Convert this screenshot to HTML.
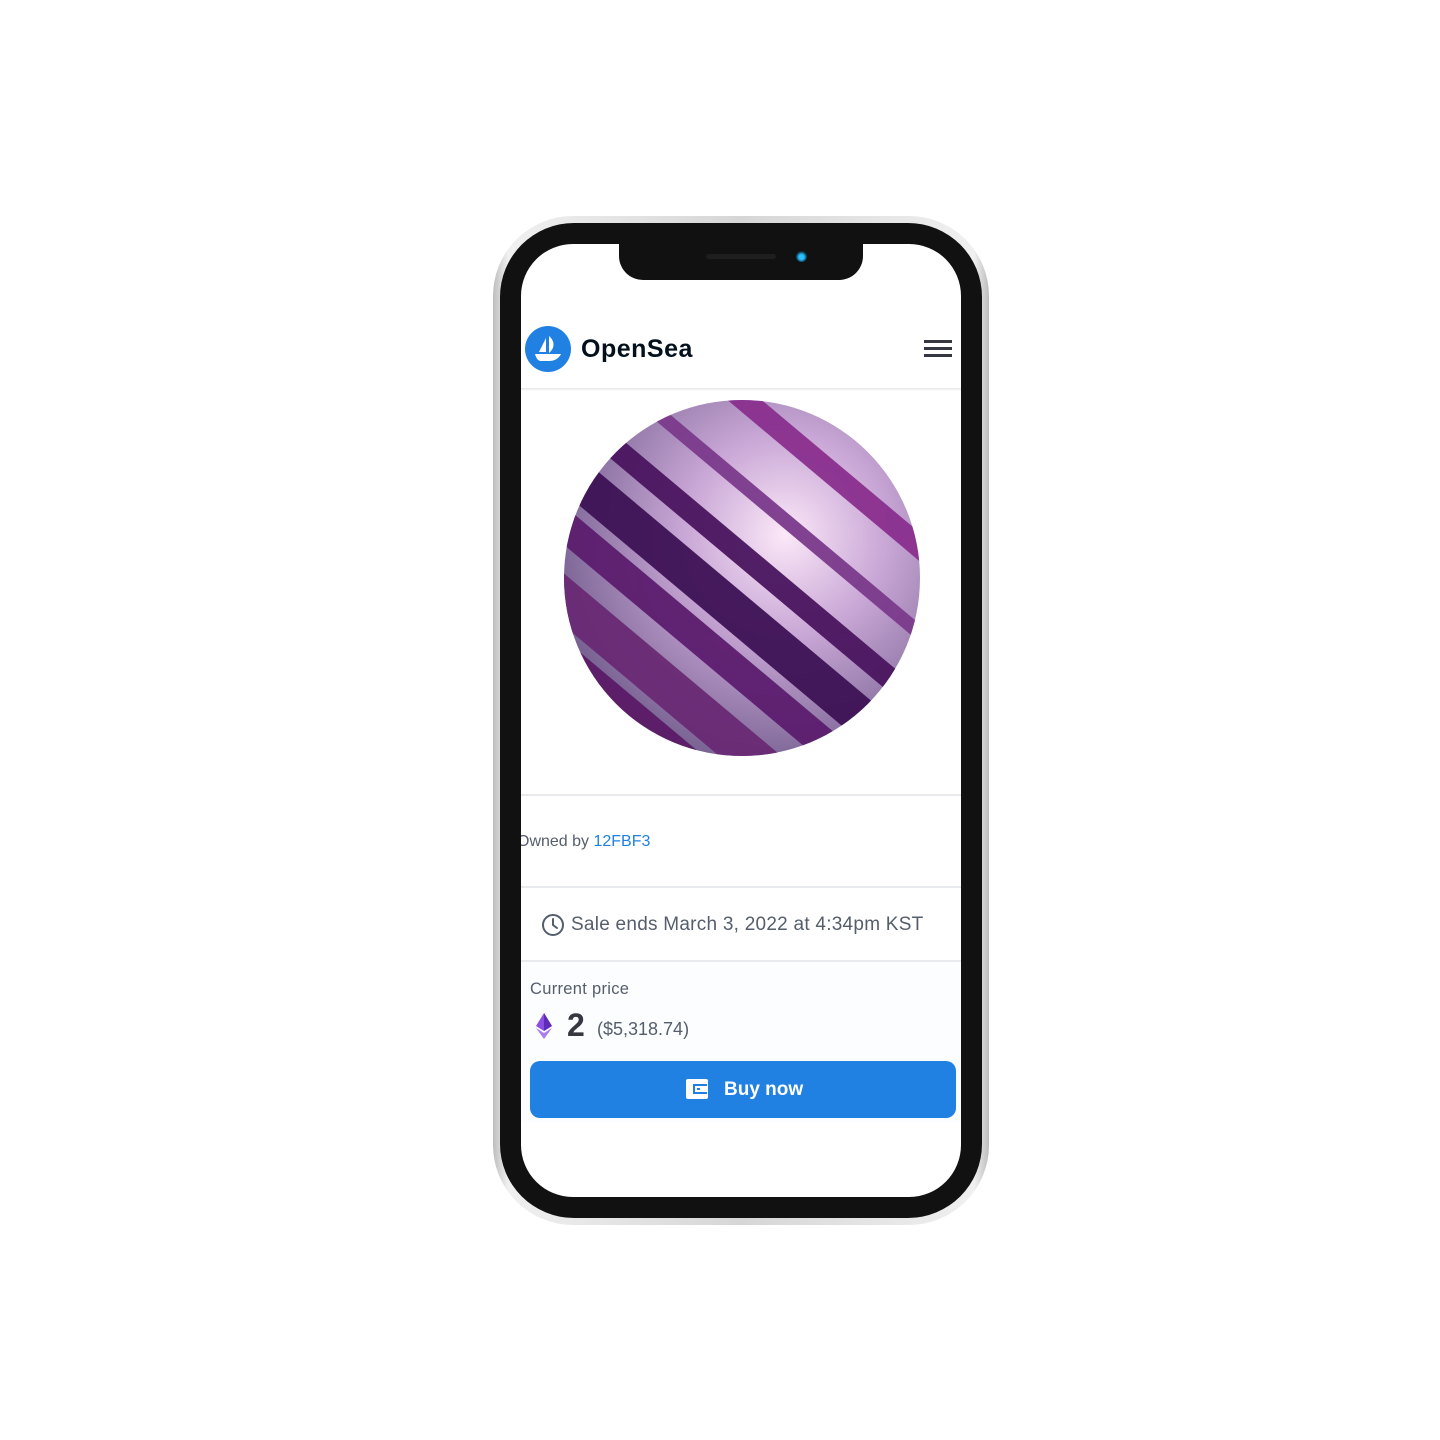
<!DOCTYPE html>
<html><head><meta charset="utf-8"><style>
*{margin:0;padding:0;box-sizing:border-box}
body{width:1440px;height:1440px;background:#fff;position:relative;overflow:hidden;font-family:"Liberation Sans",sans-serif}
.frame{position:absolute;left:493px;top:216px;width:496px;height:1009px;border-radius:80px;background:linear-gradient(90deg,#bdbdbd,#f0f0f0 3%,#d6d6d6 50%,#f0f0f0 97%,#bdbdbd);}
.bezel{position:absolute;left:500px;top:223px;width:482px;height:995px;border-radius:74px;background:#111;}
.screen{position:absolute;left:521px;top:244px;width:440px;height:953px;border-radius:52px;background:#fff;overflow:hidden}
.notch{position:absolute;left:619px;top:240px;width:244px;height:40px;background:#111;border-radius:0 0 24px 24px}
.spk{position:absolute;left:706px;top:254px;width:70px;height:5px;border-radius:3px;background:#1e1e1e}
.cam{position:absolute;left:796px;top:251px;width:11px;height:11px;border-radius:50%;background:radial-gradient(circle at 50% 55%,#2bc0ff 30%,#0a4c6a 60%,#151515 75%)}
.abs{position:absolute}
.sep{position:absolute;left:0;width:440px;height:2px;background:#e8eaed}
</style></head><body>
<div class="frame"></div>
<div class="bezel"></div>
<div class="screen">
  <div class="abs" style="left:4px;top:82px;width:46px;height:46px;border-radius:50%;background:#2081e2"></div>
  <svg class="abs" style="left:4px;top:82px" width="46" height="46" viewBox="0 0 46 46">
    <path d="M21 12 L21 26 L14 26 Z" fill="#fff"/>
    <path d="M24 10 C30 15 30 22 24 27 Z" fill="#fff"/>
    <path d="M10 28 H36 C34 32 30 35 24 35 H16 C13 35 11 32 10 28 Z" fill="#fff"/>
  </svg>
  <div class="abs" style="left:60px;top:91px;font-size:25px;font-weight:bold;color:#04111d;letter-spacing:0.5px">OpenSea</div>
  <div class="abs" style="left:403px;top:96px;width:28px;height:3px;background:#353840"></div>
  <div class="abs" style="left:403px;top:103px;width:28px;height:3px;background:#353840"></div>
  <div class="abs" style="left:403px;top:110px;width:28px;height:3px;background:#353840"></div>
  <div class="abs" style="left:0;top:144px;width:440px;height:3px;background:linear-gradient(#e4e4e4,#fff)"></div>
  <svg class="abs" style="left:42px;top:155px" width="358" height="358" viewBox="0 0 358 358">
    <defs>
      <clipPath id="c"><circle cx="179" cy="179" r="178"/></clipPath>
      <radialGradient id="g" cx="62%" cy="38%" r="70%"><stop offset="0" stop-color="#fbe8f8"/><stop offset=".4" stop-color="#c9a7d6"/><stop offset="1" stop-color="#6e5a8a"/></radialGradient>
    </defs>
    <g clip-path="url(#c)">
      <rect width="358" height="358" fill="url(#g)"/>
      <g transform="rotate(40 179 179)" opacity=".95">
        <rect x="-100" y="190" width="560" height="38" fill="#3e1256"/>
        <rect x="-100" y="238" width="560" height="30" fill="#5c1d6e"/>
        <rect x="-100" y="150" width="560" height="22" fill="#4a165f"/>
        <rect x="-100" y="290" width="560" height="40" fill="#6a2a74"/>
        <rect x="-100" y="100" width="560" height="14" fill="#7b3a8c"/>
        <rect x="-100" y="30" width="560" height="22" fill="#8a2f8e"/>
        <rect x="-100" y="340" width="560" height="40" fill="#5b1b66"/>
      </g>
    </g>
  </svg>
  <div class="sep" style="top:550px"></div>
  <div class="abs" style="left:-4px;top:589px;font-size:16px;color:#555e6b">Owned by <span style="color:#2081e2">12FBF3</span></div>
  <div class="sep" style="top:642px"></div>
  <svg class="abs" style="left:20px;top:669px" width="24" height="24" viewBox="0 0 24 24"><circle cx="12" cy="12" r="10" fill="none" stroke="#555e6b" stroke-width="2"/><path d="M12 6v6l4 3" fill="none" stroke="#555e6b" stroke-width="2" stroke-linecap="round"/></svg>
  <div class="abs" style="left:50px;top:670px;font-size:19px;color:#555e6b;letter-spacing:0.25px">Sale ends March 3, 2022 at 4:34pm KST</div>
  <div class="sep" style="top:716px"></div>
  <div class="abs" style="left:0;top:718px;width:440px;height:160px;background:#fbfdff"></div>
  <div class="abs" style="left:9px;top:736px;font-size:16.5px;color:#555e6b;letter-spacing:0.3px">Current price</div>
  <svg class="abs" style="left:14px;top:768px" width="18" height="28" viewBox="0 0 18 28"><path d="M9 1 L17 14 L9 19 L1 14 Z" fill="#8a4fe0"/><path d="M9 1 L17 14 L9 19 Z" fill="#5f2bb8"/><path d="M1 16 L9 21 L17 16 L9 27 Z" fill="#a97cf0"/></svg>
  <div class="abs" style="left:46px;top:763px;font-size:32px;font-weight:bold;color:#353840">2</div>
  <div class="abs" style="left:76px;top:775px;font-size:18px;color:#555e6b">($5,318.74)</div>
  <div class="abs" style="left:9px;top:817px;width:426px;height:57px;border-radius:10px;background:#2081e2"></div>
  <svg class="abs" style="left:164px;top:834px" width="24" height="22" viewBox="0 0 24 22"><rect x="1" y="1" width="22" height="20" rx="2" fill="#fff"/><rect x="8" y="6" width="14" height="10" fill="#2081e2"/><rect x="10" y="8" width="12" height="6" fill="#fff"/><rect x="12" y="10" width="3" height="2" fill="#2081e2"/></svg>
  <div class="abs" style="left:203px;top:835px;font-size:19px;font-weight:bold;color:#fff">Buy now</div>
</div>
<div class="notch"></div>
<div class="spk"></div>
<div class="cam"></div>
</body></html>
